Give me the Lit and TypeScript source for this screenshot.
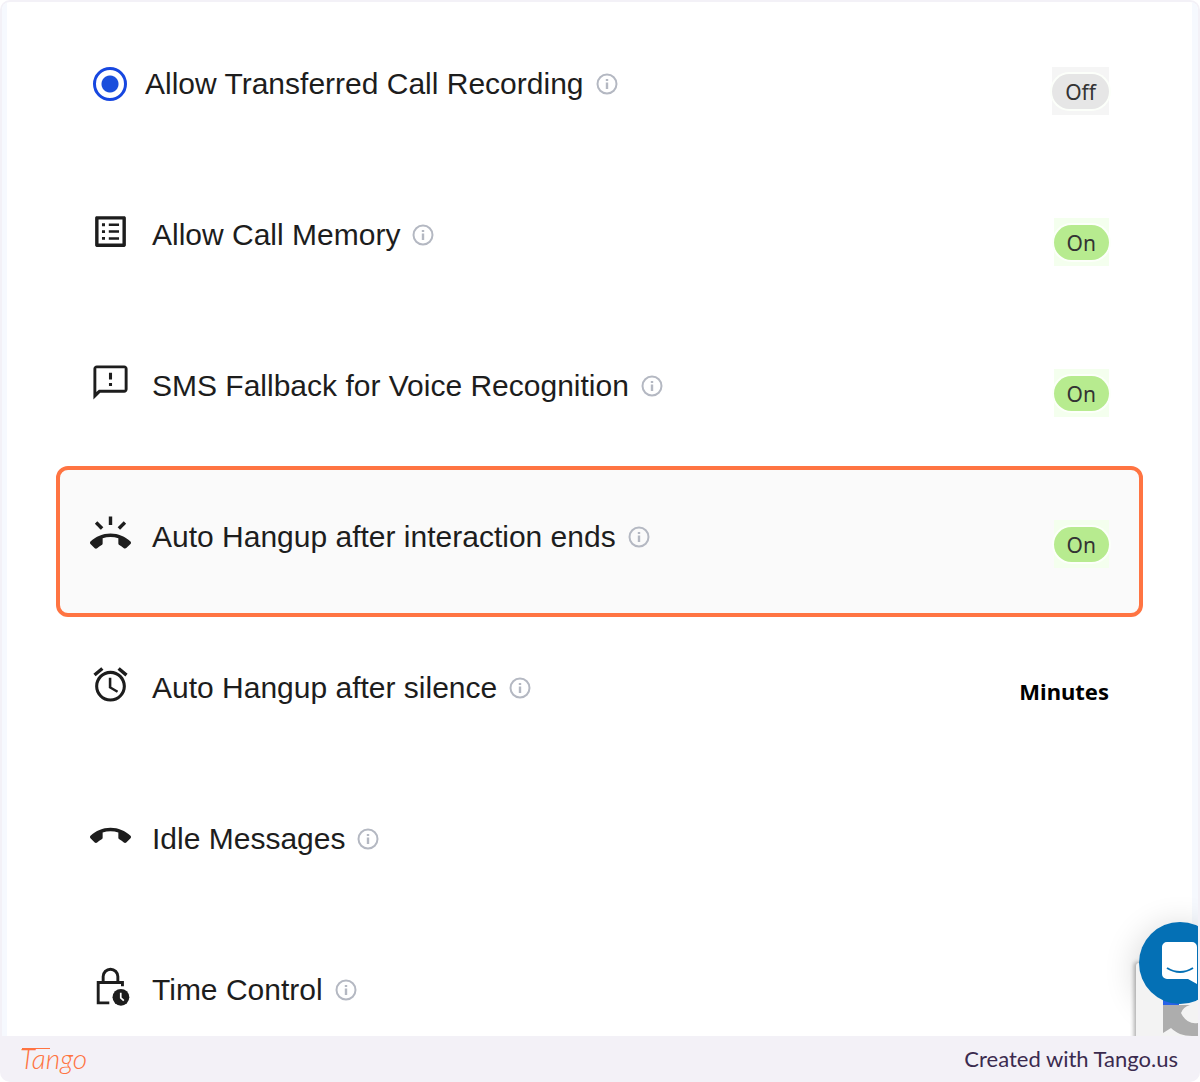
import { LitElement, html, svg, css, nothing } from "lit";
import { customElement, state } from "lit/decorators.js";
import { classMap } from "lit/directives/class-map.js";

type Row = {
  id: string;
  label: string;
  icon: string;
  toggle?: boolean;
  unit?: string;
  active?: boolean;
};

const ICONS: Record<string, unknown> = {
  list: svg`<path d="M19 5v14H5V5h14m1.1-2H3.9c-.5 0-.9.4-.9.9v16.200c0 .4.4.9.9.9h16.200c.4 0 .9-.5.9-.9V3.900c0-.5-.5-.9-.9-.9zM11 7.300h6v1.500h-6zm0 4h6v1.500h-6zm0 4h6v1.500h-6zM7 7.200h1.800v1.700H7zm0 4h1.800v1.700H7zm0 4h1.800v1.700H7z"/>`,
  sms: svg`<path d="M20 2H4c-1.100 0-1.990.9-1.990 2L2 22l4-4h14c1.100 0 2-.9 2-2V4c0-1.100-.9-2-2-2zm.3 14.300H5.200L3.700 17.600V3.700h16.600v12.600zM11.100 12.300h1.800v1.700h-1.800zm0-6h1.800v4h-1.800z"/>`,
  ring: svg`<path d="M23.710 16.670C20.660 13.780 16.540 12 12 12 7.460 12 3.340 13.780.29 16.670c-.18.18-.29.43-.29.710s.11.530.29.710l2.480 2.480c.18.18.43.29.71.29.27 0 .52-.1.7-.28.79-.74 1.690-1.360 2.660-1.850.33-.16.56-.5.56-.9v-3.100C8.850 14.250 10.400 14 12 14s3.150.25 4.590.72v3.100c0 .39.23.74.56.9.98.49 1.870 1.120 2.670 1.850.18.18.43.28.7.28.28 0 .53-.11.71-.29l2.480-2.480c.18-.18.29-.43.29-.71s-.12-.52-.29-.7zM21.160 6.260l-1.410-1.410-3.560 3.550 1.410 1.410s3.450-3.520 3.560-3.550zM13 2h-2v5h2V2zM6.400 9.810L7.810 8.400 4.260 4.840 2.840 6.260c.11.03 3.560 3.550 3.560 3.550z"/>`,
  alarm: svg`<path d="M22 5.720l-4.600-3.860-1.290 1.530 4.600 3.860L22 5.720zM7.880 3.390L6.600 1.860 2 5.710l1.290 1.530 4.590-3.850zM12.500 8H11v6l4.750 2.850.75-1.230-4-2.370V8zM12 4c-4.970 0-9 4.030-9 9s4.020 9 9 9c4.970 0 9-4.030 9-9s-4.030-9-9-9zm0 16.200c-3.970 0-7.200-3.230-7.200-7.200s3.230-7.200 7.200-7.200 7.200 3.230 7.200 7.200-3.230 7.200-7.200 7.200z"/>`,
  hangup: svg`<path transform="translate(0 .5)" d="M12 9c-1.600 0-3.150.25-4.600.72v3.100c0 .39-.23.74-.56.9-.98.49-1.870 1.120-2.660 1.850-.18.18-.43.28-.7.28-.28 0-.53-.11-.71-.29L.29 13.080c-.18-.17-.29-.42-.29-.7 0-.28.11-.53.29-.71C3.340 8.780 7.460 7 12 7s8.660 1.780 11.710 4.670c.18.18.29.43.29.71 0 .28-.11.53-.29.71l-2.480 2.480c-.18.18-.43.29-.71.29-.27 0-.52-.11-.7-.28-.79-.74-1.690-1.360-2.670-1.850-.33-.16-.56-.5-.56-.9v-3.100C15.150 9.250 13.600 9 12 9z"/>`,
  lock: svg`<path d="M11.300 21.600H4.800V9.700h14.200v2.200M7.700 9.700V6.200a4.300 4.300 0 0 1 8.600 0v3.500" fill="none" stroke="currentColor" stroke-width="1.700"/><circle cx="18.100" cy="18.300" r="4.900"/><path d="M18 15.600v3l1.800 1.700" fill="none" stroke="#fff" stroke-width="1"/>`,
};

@customElement("info-button")
export class InfoButton extends LitElement {
  static properties = { about: {} };
  declare about: string;

  static styles = css`
    :host {
      display: flex;
    }
    .info {
      display: flex;
      padding: 0;
      border: 0;
      background: none;
      color: #b4b8c2;
      cursor: pointer;
    }
  `;

  render() {
    return html`<button class="info" type="button" aria-label="About ${this.about}">
      <svg width="22" height="22" viewBox="0 0 22 22" aria-hidden="true">
        <circle cx="11" cy="11" r="9.500" fill="none" stroke="currentColor" stroke-width="2" />
        <path d="M11 9.500V16M11 6v2" stroke="currentColor" stroke-width="2.400" />
      </svg>
    </button>`;
  }
}

@customElement("app-root")
export class AppRoot extends LitElement {
  @state() private rows: Row[] = [
    { id: "transfer", label: "Allow Transferred Call Recording", icon: "radio", toggle: false },
    { id: "memory", label: "Allow Call Memory", icon: "list", toggle: true },
    { id: "sms", label: "SMS Fallback for Voice Recognition", icon: "sms", toggle: true },
    { id: "hangup", label: "Auto Hangup after interaction ends", icon: "ring", toggle: true, active: true },
    { id: "silence", label: "Auto Hangup after silence", icon: "alarm", unit: "Minutes" },
    { id: "idle", label: "Idle Messages", icon: "hangup" },
    { id: "time", label: "Time Control", icon: "lock" },
  ];

  static styles = css`
    :host {
      display: block;
      font-family: "Liberation Sans", Arial, sans-serif;
      color: #1d1d1d;
    }
    * {
      box-sizing: border-box;
    }
    .frame {
      overflow: hidden;
      border-radius: 10px;
      background: #f3f1f7;
    }
    .screen {
      position: relative;
      overflow: hidden;
      margin: 2px 2px 0;
      border-radius: 8px 8px 0 0;
    }
    .panel {
      padding: 11px 49px 0;
      border: solid #f6f9fe;
      border-width: 0 6px 0 5px;
      background: #fff;
    }
    .rows {
      margin: 0;
      padding: 0;
      list-style: none;
    }
    .row {
      display: flex;
      align-items: flex-start;
      min-height: 151px;
      padding: 47px 34px 0;
    }
    .row:last-child {
      min-height: 117px;
    }
    .active {
      padding: 43px 30px 0;
      border: 4px solid #ff7442;
      border-radius: 12px;
      background: #fafafa;
    }
    .icon {
      flex: none;
      width: 41px;
      height: 41px;
      margin-right: 21px;
      fill: currentColor;
    }
    .radio {
      flex: none;
      appearance: none;
      width: 34px;
      height: 34px;
      margin: 7px 18px 0 3px;
      border: 3px solid #1747e0;
      border-radius: 50%;
      background: radial-gradient(circle, #1b4fdc 8px, #fff 9px);
    }
    .name {
      display: flex;
      align-items: center;
      gap: 12px;
      flex: 1;
      font-size: 30px;
      line-height: 48px;
    }
    .badge {
      height: 48px;
      margin-top: 7px;
      padding: 0;
      border: 0;
      background: #f4ffee;
      font: 400 21px/34px "Noto Sans", sans-serif;
      color: #333;
      cursor: pointer;
    }
    .pill {
      display: block;
      padding: 1px 13px 0;
      border-radius: 18px;
      background: #b7eb8f;
      box-shadow: 0 0 0 2px #fcfffa;
    }
    .off {
      background: #f5f5f5;
    }
    .off .pill {
      background: #e6e6e6;
    }
    .unit {
      margin-top: 3px;
      font: 700 22px/48px "Noto Sans", sans-serif;
      color: #000;
    }
    .chat {
      position: absolute;
      right: 0;
      bottom: 0;
      width: 160px;
      height: 200px;
      pointer-events: none;
    }
    .footer {
      display: flex;
      align-items: center;
      justify-content: space-between;
      height: 46px;
      padding: 0 22px 0 20px;
    }
    .brand {
      padding-bottom: 2px;
      background: linear-gradient(#ff7442, #ff7442) 2px 10px / 28px 1px no-repeat;
      font: italic 300 28px/40px Lato, sans-serif;
      color: #ff7442;
      text-decoration: none;
    }
    .credit {
      font: 400 22px/44px Lato, sans-serif;
      color: #3b2b4f;
      text-decoration: none;
    }
  `;

  private flip(id: string) {
    this.rows = this.rows.map((r) => (r.id === id ? { ...r, toggle: !r.toggle } : r));
  }

  private lead(r: Row) {
    return r.icon === "radio"
      ? html`<input class="radio" type="radio" id=${r.id} name="recording" checked />`
      : html`<svg class="icon" viewBox="0 0 24 24" aria-hidden="true">${ICONS[r.icon]}</svg>`;
  }

  private row(r: Row) {
    return html`<li class=${classMap({ row: true, active: !!r.active })}>
      ${this.lead(r)}
      <div class="name">
        ${r.icon === "radio" ? html`<label for=${r.id}>${r.label}</label>` : html`<span>${r.label}</span>`}
        <info-button .about=${r.label}></info-button>
      </div>
      ${r.toggle === undefined
        ? nothing
        : html`<button
            type="button"
            class=${classMap({ badge: true, off: !r.toggle })}
            aria-pressed=${r.toggle}
            @click=${() => this.flip(r.id)}
          ><span class="pill">${r.toggle ? "On" : "Off"}</span></button>`}
      ${r.unit ? html`<span class="unit">${r.unit}</span>` : nothing}
    </li>`;
  }

  render() {
    return html`<div class="frame">
      <div class="screen">
        <main class="panel">
          <ul class="rows">${this.rows.map((r) => this.row(r))}</ul>
        </main>
        <svg class="chat" viewBox="0 0 160 200" aria-hidden="true">
          <defs>
            <filter id="soft" x="-50%" y="-50%" width="200%" height="200%">
              <feGaussianBlur stdDeviation="16" />
            </filter>
            <filter id="edge" x="-20%" y="-20%" width="140%" height="140%">
              <feGaussianBlur stdDeviation="2" />
            </filter>
          </defs>
          <circle cx="142" cy="134" r="46" fill="#000" opacity=".14" filter="url(#soft)" />
          <rect x="96" y="126" width="80" height="90" rx="3" fill="#777" opacity=".6" filter="url(#edge)" />
          <rect x="98" y="127" width="80" height="90" rx="3" fill="#f3f3f3" />
          <path d="M125 169h27q-7 2-9 8 6 12 17 10v13h-6c-9 0-16-3-21-8l-8 5z" fill="#adadad" />
          <path d="M125 164h16v5h-16z" fill="#2862e8" />
          <circle cx="142" cy="127" r="41" fill="#0470b5" />
          <path d="M130 106h25a5 5 0 0 1 5 5v37l-9-5h-21a5 5 0 0 1-5-5v-27a5 5 0 0 1 5-5z" transform="translate(-1 0)" fill="#fff" />
          <path d="M129 132q13 8 26 0" fill="none" stroke="#0470b5" stroke-width="2" />
        </svg>
      </div>
      <footer class="footer">
        <a class="brand" href="#tango">Tango</a>
        <a class="credit" href="#created">Created with Tango.us</a>
      </footer>
    </div>`;
  }
}
